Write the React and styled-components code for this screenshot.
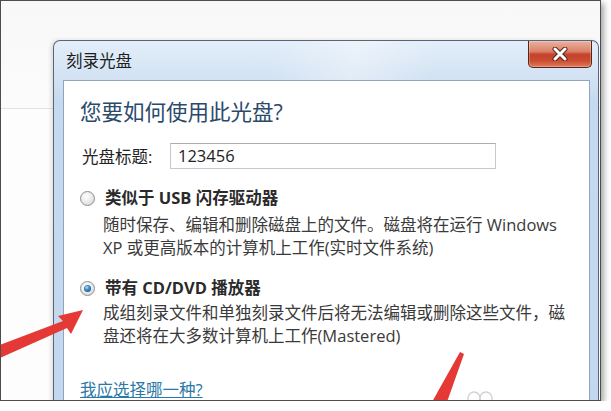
import styled, { createGlobalStyle } from 'styled-components'

const GlobalStyle = createGlobalStyle`
  html, body {
    margin: 0;
    padding: 0;
    background: #ffffff;
    overflow: hidden;
  }
  body {
    font-family: "Open Sans", "Noto Sans CJK SC", sans-serif;
  }
`

const Frame = styled.div`
  position: relative;
  width: 601px;
  height: 401px;
  box-sizing: border-box;
  border: 1px solid #4d4d4d;
  overflow: hidden;
  box-shadow: 3px 3px 6px rgba(0, 0, 0, 0.35);
  background:
    linear-gradient(#e2e2e2, #e2e2e2) 0 107px / 100% 1px no-repeat,
    linear-gradient(#f8f8f8, #fbfbfb 107px, #fdfdfd 108px);
  padding: 39px 0 0 52px;
`

const Dialog = styled.div`
  width: 546px;
  box-sizing: border-box;
  border: 1px solid #56657a;
  border-bottom: none;
  border-radius: 7px 7px 0 0;
  background: linear-gradient(180deg, #e3eef9 0px, #d2e2f3 38px, #c5d9ef 60px, #c3d8ee 100%);
  box-shadow: -2px 0 4px rgba(0, 0, 0, 0.12);
`

const TitleBar = styled.div`
  display: flex;
  justify-content: space-between;
  align-items: flex-start;
  height: 39px;
  background: linear-gradient(100deg, rgba(255, 255, 255, 0) 40%, rgba(255, 255, 255, 0.35) 55%, rgba(255, 255, 255, 0) 70%);
`

const Title = styled.div`
  padding-left: 12px;
  line-height: 39px;
  font-size: 16.5px;
  color: #1e1e1e;
`

const CloseButton = styled.button`
  display: flex;
  align-items: center;
  justify-content: center;
  width: 64px;
  height: 27px;
  margin: 0 6px 0 0;
  padding: 0;
  border: 1px solid #5c2419;
  border-top: none;
  border-radius: 0 0 5px 5px;
  background: linear-gradient(180deg, #eab1a2 0%, #dc8169 40%, #c4432a 52%, #c94c30 75%, #df7a5c 100%);
  box-shadow: inset 0 0 0 1px rgba(255, 255, 255, 0.25);
`

const Content = styled.div`
  margin: 0 8px 0 9px;
  height: 330px;
  border: 1px solid #8ea5bf;
  border-bottom: none;
  background: #ffffff;
  padding: 17px 16px 0 16px;
  color: #2a2a2a;
  font-size: 16.5px;
`

const Heading = styled.div`
  font-size: 21.5px;
  line-height: 28px;
  color: #2b4a6b;
`

const FieldRow = styled.div`
  display: flex;
  align-items: center;
  margin-top: 17px;
`

const Label = styled.span`
  width: 90px;
  padding-left: 2px;
  box-sizing: border-box;
  color: #222;
`

const TextBox = styled.div`
  width: 326px;
  height: 26px;
  box-sizing: border-box;
  border: 1px solid #c6c9cf;
  border-top-color: #a9adb5;
  padding-left: 7px;
  line-height: 24px;
  color: #222;
`

const Option = styled.div`
  margin-top: ${({ $gap }) => $gap}px;
`

const OptionTitle = styled.div`
  display: flex;
  align-items: center;
  line-height: 22px;
  font-weight: 700;
  color: #2a2a2a;
`

const Radio = styled.span`
  position: relative;
  width: 13px;
  height: 13px;
  margin-right: 10px;
  border-radius: 50%;
  border: 1px solid #8c8e90;
  background: radial-gradient(circle at 40% 35%, #ffffff 0, #ececec 45%, #cdcfd1 100%);
  flex: none;

  &::after {
    content: '';
    display: ${({ $checked }) => ($checked ? 'block' : 'none')};
    position: absolute;
    left: 3px;
    top: 3px;
    width: 7px;
    height: 7px;
    border-radius: 50%;
    background: radial-gradient(circle at 40% 35%, #b6e0fb 0, #3a86c3 40%, #15466f 100%);
  }
`

const Description = styled.div`
  padding-left: 23px;
  margin-top: ${({ $gap }) => $gap}px;
  line-height: 23px;
  color: #3a3a3a;
`

const HelpLink = styled.a`
  display: inline-block;
  margin-top: 32px;
  line-height: 22px;
  color: #2b79a7;
  text-decoration: underline;
`

const Overlay = styled.svg`
  position: absolute;
  left: 0;
  top: 0;
  pointer-events: none;
`

const App = () => {
  return (
    <>
      <GlobalStyle />
      <Frame>
        <Dialog>
          <TitleBar>
            <Title>刻录光盘</Title>
            <CloseButton aria-label="关闭">
              <svg width="18" height="14" viewBox="0 0 18 14">
                <path d="M4 2 L14 12 M14 2 L4 12" stroke="#5a241a" strokeWidth="5" strokeLinecap="round" />
                <path d="M4 2 L14 12 M14 2 L4 12" stroke="#ffffff" strokeWidth="3" strokeLinecap="round" />
              </svg>
            </CloseButton>
          </TitleBar>
          <Content>
            <Heading>您要如何使用此光盘?</Heading>
            <FieldRow>
              <Label>光盘标题:</Label>
              <TextBox>123456</TextBox>
            </FieldRow>
            <Option $gap={18}>
              <OptionTitle>
                <Radio />
                类似于 USB 闪存驱动器
              </OptionTitle>
              <Description $gap={4}>
                随时保存、编辑和删除磁盘上的文件。磁盘将在运行 Windows
                <br />
                XP 或更高版本的计算机上工作(实时文件系统)
              </Description>
            </Option>
            <Option $gap={18}>
              <OptionTitle>
                <Radio $checked />
                带有 CD/DVD 播放器
              </OptionTitle>
              <Description $gap={2}>
                成组刻录文件和单独刻录文件后将无法编辑或删除这些文件，磁
                <br />
                盘还将在大多数计算机上工作(Mastered)
              </Description>
            </Option>
            <HelpLink href="#">我应选择哪一种?</HelpLink>
          </Content>
        </Dialog>
        <Overlay width="599" height="399" viewBox="1 1 599 399">
          <polygon
            points="83,310 58,316 63,321 0,345 0,358 67,328 71,334"
            fill="#e53935"
          />
          <polygon points="460,352 464,354 447,402 432,402" fill="#e53935" />
          <circle cx="474" cy="398" r="6" fill="none" stroke="#d4d4d4" strokeWidth="1.5" />
          <circle cx="486" cy="398" r="6" fill="none" stroke="#d4d4d4" strokeWidth="1.5" />
        </Overlay>
      </Frame>
    </>
  )
}

export default App
